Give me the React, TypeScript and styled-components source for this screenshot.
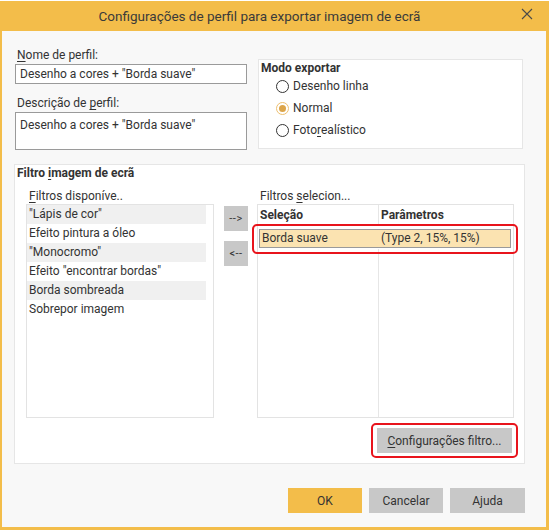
import React from "react";
import styled, { createGlobalStyle } from "styled-components";

const Global = createGlobalStyle`
  html, body { margin: 0; padding: 0; background: #ffffff; }
  body { font-family: Roboto, "Noto Sans", "Liberation Sans", sans-serif; color: #333; }
  * { box-sizing: border-box; }
`;

const Window = styled.div`
  margin-top: 1px;
  width: 549px;
  height: 529px;
  border-left: 2px solid #f3bd4a;
  border-right: 3px solid #f3bd4a;
  border-bottom: 3px solid #f3bd4a;
  background: #f8f8f8;
  display: flex;
  flex-direction: column;
`;

const TitleBar = styled.div`
  height: 30px;
  background: #f3bd4a;
  display: flex;
  align-items: center;
  justify-content: center;
  padding-right: 29px;
  position: relative;
  font-size: 13.5px;
  color: #3a3a3a;
  flex-shrink: 0;
`;

const CloseBtn = styled.div`
  position: absolute;
  right: 13px;
  top: 7px;
  width: 12px;
  height: 12px;
  display: flex;
`;

const Body = styled.div`
  flex: 1;
  padding: 17px 21px 14px 12px;
  display: flex;
  flex-direction: column;
`;

const TopRow = styled.div`
  display: flex;
  align-items: flex-start;
`;

const LeftCol = styled.div`
  margin-left: 1px;
  width: 232px;
  display: flex;
  flex-direction: column;
`;

const Label = styled.div<{ $mt?: number }>`
  font-size: 12px;
  line-height: 14px;
  height: 14px;
  padding-left: 2px;
  margin-top: ${(p) => p.$mt ?? 0}px;
  margin-bottom: 2px;
  color: #333;
  white-space: nowrap;
`;

const U = styled.span`
  text-decoration: underline;
  text-underline-offset: 2px;
`;

const Field = styled.div<{ $h: number }>`
  height: ${(p) => p.$h}px;
  background: #fff;
  border: 1px solid #9a9a9a;
  font-size: 12px;
  line-height: 14px;
  padding: ${(p) => (p.$h > 30 ? "5px 4px" : "2px 4px")};
  display: flex;
  align-items: ${(p) => (p.$h > 30 ? "flex-start" : "center")};
  color: #333;
  white-space: nowrap;
`;

const Group = styled.div`
  background: #fff;
  border: 1px solid #e6e6e6;
`;

const ModeGroup = styled(Group)`
  margin-left: 11px;
  margin-top: 11px;
  width: 265px;
  height: 90px;
  padding: 1px 0 0 2px;
`;

const GroupTitle = styled.div`
  font-size: 12px;
  font-weight: 700;
  line-height: 14px;
  color: #333;
  white-space: nowrap;
`;

const RadioRow = styled.div`
  height: 22px;
  display: flex;
  align-items: center;
  padding-left: 15px;
  gap: 4px;
  font-size: 12px;
  color: #333;
`;

const RadioCircle = styled.span<{ $checked?: boolean }>`
  width: 13px;
  height: 13px;
  border-radius: 50%;
  border: 1px solid ${(p) => (p.$checked ? "#eec070" : "#333")};
  background: #fff;
  display: flex;
  align-items: center;
  justify-content: center;
  &::after {
    content: "";
    width: 7px;
    height: 7px;
    border-radius: 50%;
    background: ${(p) => (p.$checked ? "#dca54a" : "transparent")};
  }
`;

const FilterGroup = styled(Group)`
  margin-top: 14px;
  height: 300px;
  padding: 1px 10px 0 2px;
  display: flex;
  flex-direction: column;
`;

const ColumnsRow = styled.div`
  display: flex;
  margin-top: 9px;
  padding-left: 9px;
`;

const ListCol = styled.div<{ $w: number }>`
  width: ${(p) => p.$w}px;
  flex-shrink: 0;
  display: flex;
  flex-direction: column;
`;

const ListLabel = styled.div`
  font-size: 12px;
  line-height: 14px;
  height: 15px;
  padding-left: 3px;
  color: #333;
  white-space: nowrap;
`;

const ListBox = styled.div`
  height: 214px;
  background: #fff;
  border: 1px solid #e3e3e3;
  padding-right: 7px;
`;

const ListItem = styled.div<{ $shade?: boolean }>`
  height: 19px;
  line-height: 19px;
  font-size: 12px;
  padding-left: 2px;
  background: ${(p) => (p.$shade ? "#f0f0f0" : "#fff")};
  color: #333;
  white-space: nowrap;
`;

const ArrowCol = styled.div`
  margin: 17px 9px 0 10px;
  flex-shrink: 0;
  display: flex;
  flex-direction: column;
  gap: 10px;
`;

const ArrowBtn = styled.div`
  width: 24px;
  height: 25px;
  background: #c8c8c8;
  display: flex;
  align-items: center;
  justify-content: center;
  font-size: 11px;
  color: #333;
  letter-spacing: 0.5px;
`;

const Table = styled.div`
  position: relative;
  height: 214px;
  background: #fff;
  border: 1px solid #e3e3e3;
  display: grid;
  grid-template-columns: 120px 1fr;
  grid-template-rows: 21px 23px 1fr;
`;

const HeadCell = styled.div<{ $divider?: boolean }>`
  font-size: 12px;
  font-weight: 700;
  line-height: 21px;
  padding-left: 2px;
  color: #333;
  border-left: ${(p) => (p.$divider ? "1px solid #e6e6e6" : "none")};
`;

const SelRow = styled.div`
  grid-column: 1 / 3;
  margin: 3px 2px 1px 1px;
  background: #fbe3b1;
  border: 1px solid #9a9a9a;
  display: grid;
  grid-template-columns: 119px 1fr;
  font-size: 12px;
  line-height: 17px;
  color: #333;
`;

const SelCell = styled.div<{ $divider?: boolean }>`
  padding-left: 2px;
  white-space: nowrap;
  border-left: ${(p) => (p.$divider ? "1px solid #e0d2b0" : "none")};
`;

const EmptyCell = styled.div<{ $divider?: boolean }>`
  border-left: ${(p) => (p.$divider ? "1px solid #e6e6e6" : "none")};
`;

const Highlight = styled.div<{ $l: number; $t: number; $w: number; $h: number }>`
  position: absolute;
  left: ${(p) => p.$l}px;
  top: ${(p) => p.$t}px;
  width: ${(p) => p.$w}px;
  height: ${(p) => p.$h}px;
  border: 2px solid #e8141c;
  border-radius: 5px;
  pointer-events: none;
`;

const FilterBtnRow = styled.div`
  display: flex;
  justify-content: flex-end;
  margin: 10px 2px 0 0;
`;

const BtnWrap = styled.div`
  position: relative;
`;

const Button = styled.div<{ $primary?: boolean; $w: number }>`
  width: ${(p) => p.$w}px;
  height: 25px;
  background: ${(p) => (p.$primary ? "#f3bd4a" : "#c8c8c8")};
  display: flex;
  align-items: center;
  justify-content: center;
  font-size: 12px;
  color: #333;
  white-space: nowrap;
`;

const Footer = styled.div`
  margin-top: 24px;
  display: flex;
  justify-content: flex-end;
  gap: 7px;
`;

const filters = [
  '"Lápis de cor"',
  "Efeito pintura a óleo",
  '"Monocromo"',
  'Efeito "encontrar bordas"',
  "Borda sombreada",
  "Sobrepor imagem",
];

export default function App() {
  return (
    <>
      <Global />
      <Window>
        <TitleBar>
          Configurações de perfil para exportar imagem de ecrã
          <CloseBtn>
            <svg width="12" height="12" viewBox="0 0 12 12">
              <path d="M1 1 L11 11 M11 1 L1 11" stroke="#4a4a4a" strokeWidth="1.1" fill="none" />
            </svg>
          </CloseBtn>
        </TitleBar>
        <Body>
          <TopRow>
            <LeftCol>
              <Label>
                <U>N</U>ome de perfil:
              </Label>
              <Field $h={20}>Desenho a cores + "Borda suave"</Field>
              <Label $mt={12}>
                Descrição de <U>p</U>erfil:
              </Label>
              <Field $h={38}>Desenho a cores + "Borda suave"</Field>
            </LeftCol>
            <ModeGroup>
              <GroupTitle>Modo exportar</GroupTitle>
              <RadioRow>
                <RadioCircle />
                Desenho linha
              </RadioRow>
              <RadioRow>
                <RadioCircle $checked />
                Normal
              </RadioRow>
              <RadioRow>
                <RadioCircle />
                <span>
                  Foto<U>r</U>ealístico
                </span>
              </RadioRow>
            </ModeGroup>
          </TopRow>
          <FilterGroup>
            <GroupTitle>
              Filtro <U>i</U>magem de ecrã
            </GroupTitle>
            <ColumnsRow>
              <ListCol $w={188}>
                <ListLabel>
                  <U>F</U>iltros disponíve..
                </ListLabel>
                <ListBox>
                  {filters.map((f, i) => (
                    <ListItem key={f} $shade={i % 2 === 0}>
                      {f}
                    </ListItem>
                  ))}
                </ListBox>
              </ListCol>
              <ArrowCol>
                <ArrowBtn>--&gt;</ArrowBtn>
                <ArrowBtn>&lt;--</ArrowBtn>
              </ArrowCol>
              <ListCol $w={257}>
                <ListLabel>
                  Filtros <U>s</U>elecion...
                </ListLabel>
                <Table>
                  <HeadCell>Seleção</HeadCell>
                  <HeadCell $divider>Parâmetros</HeadCell>
                  <SelRow>
                    <SelCell>Borda suave</SelCell>
                    <SelCell>(Type 2, 15%, 15%)</SelCell>
                  </SelRow>
                  <EmptyCell />
                  <EmptyCell $divider />
                  <Highlight $l={-6} $t={19} $w={266} $h={30} />
                </Table>
              </ListCol>
            </ColumnsRow>
            <FilterBtnRow>
              <BtnWrap>
                <Button $w={135}>
                  <span>
                    <U>C</U>onfigurações filtro...
                  </span>
                </Button>
                <Highlight $l={-6} $t={-5} $w={147} $h={35} />
              </BtnWrap>
            </FilterBtnRow>
          </FilterGroup>
          <Footer>
            <Button $primary $w={74}>OK</Button>
            <Button $w={74}>Cancelar</Button>
            <Button $w={75}>Ajuda</Button>
          </Footer>
        </Body>
      </Window>
    </>
  );
}
